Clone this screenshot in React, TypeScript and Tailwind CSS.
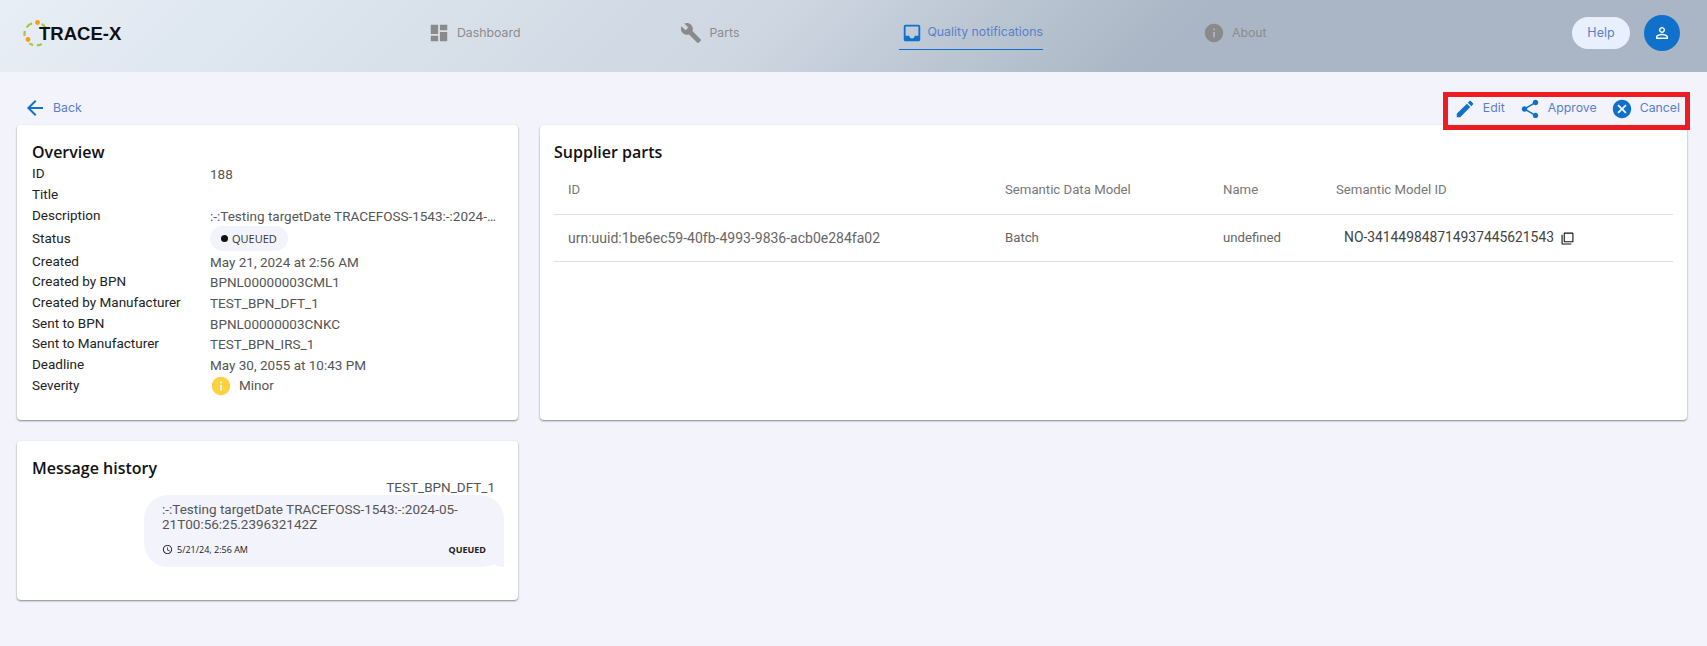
const body = "font-['Open_Sans','Noto_Sans',sans-serif]";
const rows = "font-['Roboto',sans-serif]";

const Icon = ({ d, className }: { d: string; className: string }) => (
  <svg viewBox="0 0 24 24" fill="currentColor" className={className}>
    <path d={d} />
  </svg>
);

const icons = {
  dashboard: "M3 13h8V3H3v10zm0 8h8v-6H3v6zm10 0h8V11h-8v10zm0-18v6h8V3h-8z",
  parts:
    "M22.7 19l-9.1-9.1c.9-2.3.4-5-1.5-6.9-2-2-5-2.4-7.4-1.3L9 6 6 9 1.6 4.7C.4 7.1.9 10.1 2.9 12.1c1.9 1.9 4.6 2.4 6.9 1.5l9.1 9.1c.4.4 1 .4 1.4 0l2.3-2.3c.5-.4.5-1.1.1-1.4z",
  inbox:
    "M19 3H4.99c-1.11 0-1.98.89-1.98 2L3 19c0 1.1.88 2 1.99 2H19c1.1 0 2-.9 2-2V5c0-1.11-.9-2-2-2zm0 12h-4c0 1.66-1.35 3-3 3s-3-1.34-3-3H4.99V5H19v10z",
  info: "M12 2C6.48 2 2 6.48 2 12s4.48 10 10 10 10-4.48 10-10S17.52 2 12 2zm1 15h-2v-6h2v6zm0-8h-2V7h2v2z",
  edit: "M3 17.25V21h3.75L17.81 9.94l-3.75-3.75L3 17.25zM20.71 7.04c.39-.39.39-1.02 0-1.41l-2.34-2.34c-.39-.39-1.02-.39-1.41 0l-1.83 1.83 3.75 3.75 1.83-1.83z",
  share:
    "M18 16.08c-.76 0-1.44.3-1.96.77L8.91 12.7c.05-.23.09-.46.09-.7s-.04-.47-.09-.7l7.05-4.11c.54.5 1.25.81 2.04.81 1.66 0 3-1.34 3-3s-1.34-3-3-3-3 1.34-3 3c0 .24.04.47.09.7L8.04 9.81C7.5 9.31 6.79 9 6 9c-1.66 0-3 1.34-3 3s1.34 3 3 3c.79 0 1.5-.31 2.04-.81l7.12 4.16c-.05.21-.08.43-.08.65 0 1.61 1.31 2.92 2.92 2.92 1.61 0 2.92-1.31 2.92-2.92s-1.31-2.92-2.92-2.92z",
  cancel:
    "M12 2C6.47 2 2 6.47 2 12s4.47 10 10 10 10-4.47 10-10S17.53 2 12 2zm5 13.59L15.59 17 12 13.41 8.41 17 7 15.59 10.59 12 7 8.41 8.41 7 12 10.59 15.59 7 17 8.41 13.41 12 17 15.59z",
  back: "M20 11H7.83l5.59-5.59L12 4l-8 8 8 8 1.41-1.41L7.83 13H20v-2z",
  person:
    "M12 5.9c1.16 0 2.1.94 2.1 2.1s-.94 2.1-2.1 2.1S9.9 9.16 9.9 8s.94-2.1 2.1-2.1m0 9c2.97 0 6.1 1.46 6.1 2.1v1.1H5.9V17c0-.64 3.13-2.1 6.1-2.1M12 4C9.79 4 8 5.79 8 8s1.79 4 4 4 4-1.79 4-4-1.79-4-4-4zm0 9c-2.67 0-8 1.34-8 4v3h16v-3c0-2.66-5.33-4-8-4z",
  clock:
    "M11.99 2C6.47 2 2 6.48 2 12s4.47 10 9.99 10C17.52 22 22 17.52 22 12S17.52 2 11.99 2zM12 20c-4.42 0-8-3.58-8-8s3.58-8 8-8 8 3.58 8 8-3.58 8-8 8zm.5-13H11v6l5.25 3.15.75-1.23-4.5-2.67z",
  copy: "M3 5H1v16c0 1.1.9 2 2 2h16v-2H3V5zm18-4H7c-1.1 0-2 .9-2 2v14c0 1.1.9 2 2 2h14c1.1 0 2-.9 2-2V3c0-1.1-.9-2-2-2zm0 16H7V3h14v14z",
};

const Logo = () => (
  <svg viewBox="0 0 32 32" className="w-[32px] h-[32px] mt-[-4px] shrink-0" fill="none">
    <circle
      cx="15"
      cy="16"
      r="11.5"
      pathLength={360}
      stroke="#a9c23f"
      strokeWidth="2.2"
      strokeDasharray="0 60 25 20 20 45 25 20 35 50 30 30"
    />
    <circle cx="16.5" cy="4.5" r="2.4" fill="#f59d0e" />
    <circle cx="7" cy="21.5" r="2.4" fill="#f59d0e" />
  </svg>
);

const NavItem = ({ icon, label, active }: { icon: string; label: string; active?: boolean }) => (
  <div
    className={`flex items-center h-[34px] mt-[-6px] ${
      active ? "gap-[4px] border-b border-[#0f71cb] text-[#5a7fc9] pl-[2px]" : "gap-[7px] text-[#8c8c8c]"
    }`}
  >
    <Icon d={icon} className={`w-[22px] h-[22px] ${active ? "text-[#0f71cb]" : "text-[#8a8a8a]"}`} />
    <span className="text-[12.3px] leading-none">{label}</span>
  </div>
);

const Header = () => (
  <header className="h-[72px] flex items-center bg-[linear-gradient(135deg,#e7eef6_0%,#cdd6e1_45%,#aab6c5_68%,#aab6c5_100%)] font-['Inter',sans-serif]">
    <div className="w-[428px] pl-[21px] flex items-center shrink-0">
      <Logo />
      <span className="ml-[-14px] mt-[-3px] text-[18.5px] font-bold text-[#111] font-['Liberation_Sans',sans-serif] leading-none">
        TRACE-X
      </span>
    </div>
    <nav className="flex items-center gap-[160px]">
      <NavItem icon={icons.dashboard} label="Dashboard" />
      <NavItem icon={icons.parts} label="Parts" />
      <NavItem icon={icons.inbox} label="Quality notifications" active />
      <NavItem icon={icons.info} label="About" />
    </nav>
    <div className="ml-auto pr-[27px] mt-[-6px] flex items-center gap-[14px]">
      <button className="h-[32px] w-[58px] rounded-full bg-[#e8f0fd] text-[#5a7fc9] text-[12.5px]">Help</button>
      <div className="w-[36px] h-[36px] rounded-full bg-[#0f71cb] text-white flex items-center justify-center">
        <Icon d={icons.person} className="w-[18px] h-[18px]" />
      </div>
    </div>
  </header>
);

const Action = ({ icon, label }: { icon: string; label: string }) => (
  <div className="flex items-center gap-[7px] text-[12.3px] text-[#5a7fc9]">
    <Icon d={icon} className="w-[22px] h-[22px] text-[#0f71cb]" />
    <span>{label}</span>
  </div>
);

const TopBar = () => (
  <div className="flex items-start justify-between pt-[20px] pl-[23px] pr-[17px] font-['Inter',sans-serif]">
    <div className="flex items-center gap-[6px] h-[32px] text-[12.3px] text-[#5a7fc9]">
      <Icon d={icons.back} className="w-[24px] h-[24px] text-[#0f71cb]" />
      <span>Back</span>
    </div>
    <div className="relative z-10 -mb-[5px] h-[38px] border-[5px] border-[#ed1c24] flex items-center gap-[14px] pl-[6px] pr-[5px] pb-[5px]">
      <Action icon={icons.edit} label="Edit" />
      <Action icon={icons.share} label="Approve" />
      <Action icon={icons.cancel} label="Cancel" />
    </div>
  </div>
);

const Card = ({ title, className, children }: { title: string; className: string; children: React.ReactNode }) => (
  <section className={`bg-white rounded-[4px] shadow-[0_1px_2px_rgba(0,0,0,0.45)] ${className}`}>
    <h2 className="text-[16px] leading-[20px] font-semibold text-[#111]">{title}</h2>
    {children}
  </section>
);

const overview: [string, string, string][] = [
  ["ID", "188", "h-[21px]"],
  ["Title", "", "h-[21px]"],
  ["Description", ":-:Testing targetDate TRACEFOSS-1543:-:2024-05-21T00:56:25.239632142Z", "h-[21px]"],
  ["Status", "", "h-[25px]"],
  ["Created", "May 21, 2024 at 2:56 AM", "h-[21px]"],
  ["Created by BPN", "BPNL00000003CML1", "h-[20px]"],
  ["Created by Manufacturer", "TEST_BPN_DFT_1", "h-[21px]"],
  ["Sent to BPN", "BPNL00000003CNKC", "h-[21px]"],
  ["Sent to Manufacturer", "TEST_BPN_IRS_1", "h-[20px]"],
  ["Deadline", "May 30, 2055 at 10:43 PM", "h-[21px]"],
];

const Overview = () => (
  <Card title="Overview" className="h-[295px] px-[15px] pt-[17px]">
    <div className={`text-[13.5px] leading-none pt-[1px] ${rows}`}>
      {overview.map(([label, value, h]) => (
        <div key={label} className={`flex items-center ${h}`}>
          <span className="w-[178px] shrink-0 text-[#222]">{label}</span>
          {label === "Status" ? (
            <span className={`flex items-center gap-[4px] h-[25px] rounded-full bg-[#f2f3fb] px-[11px] text-[11px] font-medium text-[#333] ${body}`}>
              <span className="w-[7px] h-[7px] rounded-full bg-[#111]" />
              QUEUED
            </span>
          ) : (
            <span className="truncate leading-[18px] text-[#555]">{value}</span>
          )}
        </div>
      ))}
      <div className="flex items-center h-[21px]">
        <span className="w-[178px] shrink-0 text-[#222]">Severity</span>
        <span className="flex items-center gap-[7px] text-[#555]">
          <Icon d={icons.info} className="w-[22px] h-[22px] text-[#fdd13f]" />
          Minor
        </span>
      </div>
    </div>
  </Card>
);

const MessageHistory = () => (
  <Card title="Message history" className="h-[159px] px-[15px] pt-[17px]">
    <div className="flex flex-col items-end">
      <span className={`mt-[1px] mr-[8px] text-[13.5px] leading-[16px] text-[#555] ${rows}`}>TEST_BPN_DFT_1</span>
      <div className="relative w-[360px] mr-[-1px] h-[72px] rounded-[24px] bg-[#f2f3fb] px-[18px] pt-[7px]">
        <p className={`text-[13.5px] leading-[15px] text-[#555] ${rows}`}>
          :-:Testing targetDate TRACEFOSS-1543:-:2024-05-21T00:56:25.239632142Z
        </p>
        <div className="flex items-center justify-between mt-[12px] text-[9px] leading-none text-[#222]">
          <span className="flex items-center gap-[4px]">
            <Icon d={icons.clock} className="w-[11px] h-[11px]" />
            5/21/24, 2:56 AM
          </span>
          <span className="font-bold">QUEUED</span>
        </div>
        <svg viewBox="0 0 16 24" className="absolute right-0 bottom-0 w-[16px] h-[24px]" fill="#f2f3fb">
          <path d="M16 0V24C12 24 9 23 6 21C4 22 2 23 0 23V0Z" />
        </svg>
      </div>
    </div>
  </Card>
);

const SupplierParts = () => (
  <Card title="Supplier parts" className="h-[295px] px-[14px] pt-[17px]">
    <div className={`mt-[3px] text-[13.2px] leading-none ${rows}`}>
      <div className="grid grid-cols-[437px_218px_113px_1fr] items-center h-[50px] border-b border-[#dedede] text-[#777]">
        <span className="pl-[14px]">ID</span>
        <span className="pl-[14px]">Semantic Data Model</span>
        <span className="pl-[14px]">Name</span>
        <span className="pl-[14px]">Semantic Model ID</span>
      </div>
      <div className="grid grid-cols-[437px_218px_113px_1fr] items-center h-[47px] border-b border-[#dedede] text-[#666]">
        <span className="pl-[14px] text-[14px]">urn:uuid:1be6ec59-40fb-4993-9836-acb0e284fa02</span>
        <span className="pl-[14px]">Batch</span>
        <span className="pl-[14px]">undefined</span>
        <span className="pl-[22px] flex items-center gap-[7px] text-[13.85px] text-[#444]">
          NO-341449848714937445621543
          <Icon d={icons.copy} className="w-[13px] h-[13px] text-[#111]" />
        </span>
      </div>
    </div>
  </Card>
);

export default function App() {
  return (
    <div className={`min-h-screen bg-[#f2f3fb] ${body}`}>
      <Header />
      <TopBar />
      <main className="flex items-start gap-[22px] pl-[17px] pr-[20px]">
        <div className="w-[501px] shrink-0 flex flex-col gap-[21px]">
          <Overview />
          <MessageHistory />
        </div>
        <div className="flex-1">
          <SupplierParts />
        </div>
      </main>
    </div>
  );
}
